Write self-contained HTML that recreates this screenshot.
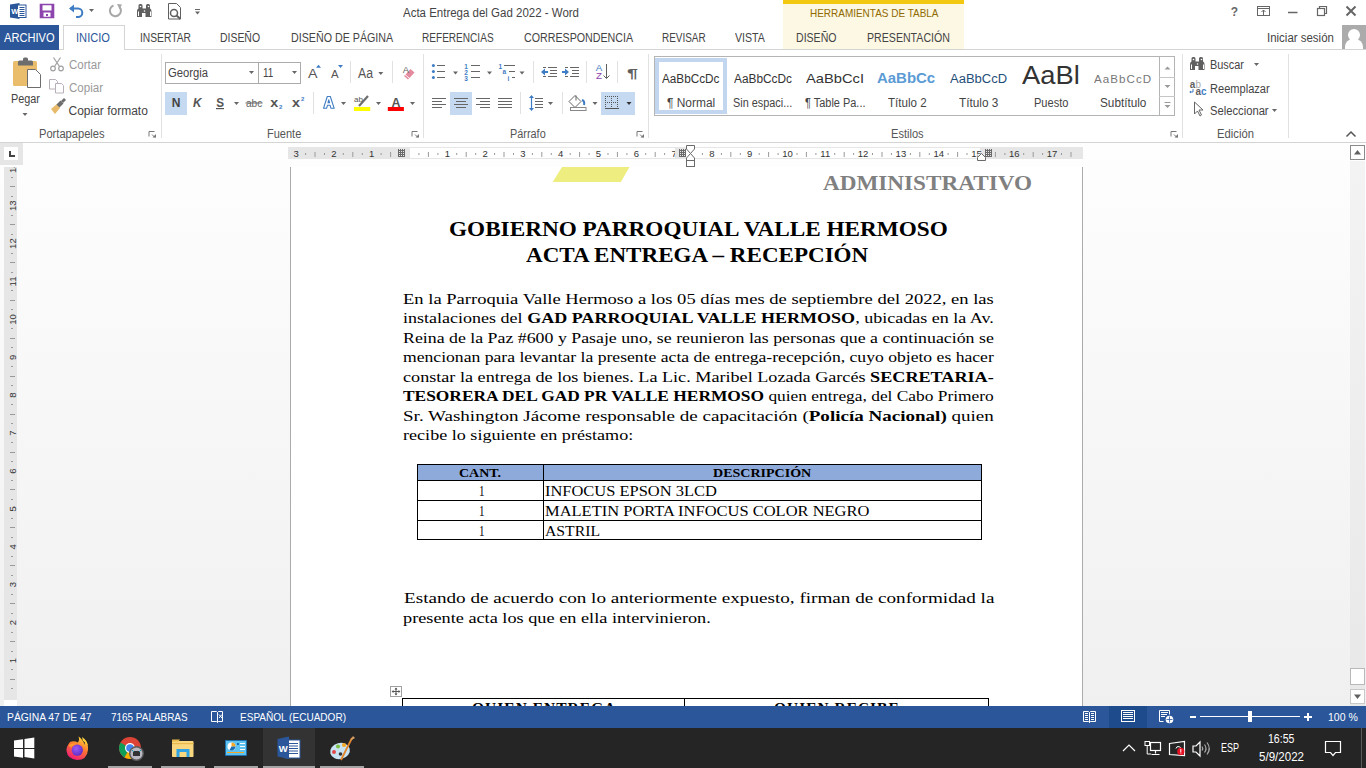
<!DOCTYPE html>
<html><head><meta charset="utf-8">
<style>
*{margin:0;padding:0;box-sizing:border-box}
html,body{width:1366px;height:768px;overflow:hidden;background:#fff;font-family:"Liberation Sans",sans-serif;color:#444;position:relative}
.a{position:absolute}
.t{position:absolute;white-space:nowrap;font-size:12px;line-height:normal;transform-origin:0 0}
.j{text-align:justify;text-align-last:justify}
svg{position:absolute;overflow:visible}
.ser{font-family:"Liberation Serif",serif}
.sep{position:absolute;width:1px;background:#E1E1E1}
</style></head><body>
<!-- ===== TITLE BAR ===== -->
<div class="t" style="--x: 403; --b: 17; --w: 176; color: rgb(68, 68, 68); left: 403px; top: 6px; transform: scaleX(0.9571);">Acta Entrega del Gad 2022 - Word</div>
<div class="a" style="left:783px;top:0;width:181px;height:49px;background:#FDF8E4"></div>
<div class="a" style="left:783px;top:0;width:181px;height:4px;background:#F2C811"></div>
<div class="t" style="--x: 809.5; --b: 17; --w: 128.5; font-size: 11px; color: rgb(143, 106, 0); left: 809.5px; top: 7px; transform: scaleX(0.9061);">HERRAMIENTAS DE TABLA</div>

<!-- ===== TABS ===== -->
<div class="a" style="left:0;top:49px;width:1366px;height:1px;background:#D4D4D4"></div>
<div class="a" style="left:0;top:25px;width:59px;height:25px;background:#2B579A"></div>
<div class="a" style="left:63px;top:25px;width:62px;height:25px;border:1px solid #D4D4D4;border-bottom:none;background:#fff"></div>
<div class="t" style="--x: 3.7; --b: 42; --w: 50.6; color: rgb(255, 255, 255); left: 3.7px; top: 31px; transform: scaleX(0.9253);">ARCHIVO</div>
<div class="t" style="--x: 76; --b: 42; --w: 34; color: rgb(43, 87, 154); left: 76px; top: 31px; transform: scaleX(0.9271);">INICIO</div>
<div class="t" style="--x: 140; --b: 42; --w: 51; left: 140px; top: 31px; transform: scaleX(0.856);">INSERTAR</div>
<div class="t" style="--x: 220; --b: 42; --w: 40; left: 220px; top: 31px; transform: scaleX(0.8693);">DISEÑO</div>
<div class="t" style="--x: 290.5; --b: 42; --w: 102.2; left: 290.5px; top: 31px; transform: scaleX(0.891);">DISEÑO DE PÁGINA</div>
<div class="t" style="--x: 422.4; --b: 42; --w: 71.6; left: 422.4px; top: 31px; transform: scaleX(0.8388);">REFERENCIAS</div>
<div class="t" style="--x: 523.6; --b: 42; --w: 109.1; left: 523.6px; top: 31px; transform: scaleX(0.8893);">CORRESPONDENCIA</div>
<div class="t" style="--x: 662.3; --b: 42; --w: 43.7; left: 662.3px; top: 31px; transform: scaleX(0.8294);">REVISAR</div>
<div class="t" style="--x: 734.7; --b: 42; --w: 29.9; left: 734.7px; top: 31px; transform: scaleX(0.8847);">VISTA</div>
<div class="t" style="--x: 796; --b: 42; --w: 40.5; left: 796px; top: 31px; transform: scaleX(0.8801);">DISEÑO</div>
<div class="t" style="--x: 866.5; --b: 42; --w: 82.9; left: 866.5px; top: 31px; transform: scaleX(0.8838);">PRESENTACIÓN</div>
<div class="t" style="--x: 1267.4; --b: 41.5; --w: 66.9; left: 1267.4px; top: 30.5px; transform: scaleX(0.9553);">Iniciar sesión</div>
<div class="a" style="left:1342px;top:25px;width:24px;height:24px;background:#ABABAB;overflow:hidden">
 <div class="a" style="left:6px;top:4px;width:12px;height:12px;border-radius:6px;background:#fff"></div>
 <div class="a" style="left:3px;top:14px;width:18px;height:14px;border-radius:8px 8px 0 0;background:#fff"></div>
</div>

<!-- ===== RIBBON TEXT ===== -->
<div class="t" style="--x: 10.8; --b: 103; --w: 29; left: 10.8px; top: 92px; transform: scaleX(0.9054);">Pegar</div>
<div class="t" style="--x: 69; --b: 69; --w: 32; color: rgb(154, 154, 154); left: 69px; top: 58px; transform: scaleX(0.9597);">Cortar</div>
<div class="t" style="--x: 69; --b: 92; --w: 34; color: rgb(154, 154, 154); left: 69px; top: 81px; transform: scaleX(0.9616);">Copiar</div>
<div class="t" style="--x: 68.5; --b: 115; --w: 79.5; left: 68.5px; top: 104px;">Copiar formato</div>
<div class="t" style="--x: 38.6; --b: 138; --w: 65.6; color: rgb(85, 85, 85); left: 38.6px; top: 127px; transform: scaleX(0.9276);">Portapapeles</div>
<div class="t" style="--x: 168.4; --b: 77; --w: 40; left: 168.4px; top: 66px; transform: scaleX(0.9367);">Georgia</div>
<div class="t" style="--x: 262.7; --b: 77; --w: 10.3; left: 262.7px; top: 66px; transform: scaleX(0.8261);">11</div>
<div class="t" style="--x: 266.7; --b: 138; --w: 34.3; color: rgb(85, 85, 85); left: 266.7px; top: 127px; transform: scaleX(0.9181);">Fuente</div>
<div class="t" style="--x: 509.6; --b: 138; --w: 35.7; color: rgb(85, 85, 85); left: 509.6px; top: 127px; transform: scaleX(0.907);">Párrafo</div>
<div class="t" style="--x: 891; --b: 138; --w: 32.6; color: rgb(85, 85, 85); left: 891px; top: 127px; transform: scaleX(0.9224);">Estilos</div>
<div class="t" style="--x: 1216.5; --b: 138; --w: 36.9; color: rgb(85, 85, 85); left: 1216.5px; top: 127px; transform: scaleX(0.9375);">Edición</div>
<div class="t" style="--x: 1210; --b: 69.3; --w: 34; left: 1210px; top: 58.3px; transform: scaleX(0.9101);">Buscar</div>
<div class="t" style="--x: 1209.8; --b: 92.5; --w: 59.7; left: 1209.8px; top: 81.5px; transform: scaleX(0.9227);">Reemplazar</div>
<div class="t" style="--x: 1209.8; --b: 115; --w: 58.6; left: 1209.8px; top: 104px; transform: scaleX(0.9346);">Seleccionar</div>
<!-- style labels -->
<div class="t" style="--x: 666.5; --b: 106.5; --w: 48.2; left: 666.5px; top: 95.5px; transform: scaleX(0.9948);">¶ Normal</div>
<div class="t" style="--x: 732.7; --b: 106.5; --w: 59.3; left: 732.7px; top: 95.5px; transform: scaleX(0.9071);">Sin espaci...</div>
<div class="t" style="--x: 804.8; --b: 106.5; --w: 60.5; left: 804.8px; top: 95.5px; transform: scaleX(0.913);">¶ Table Pa...</div>
<div class="t" style="--x: 887.8; --b: 106.5; --w: 38.6; left: 887.8px; top: 95.5px; transform: scaleX(0.9642);">Título 2</div>
<div class="t" style="--x: 959; --b: 106.5; --w: 39.4; left: 959px; top: 95.5px; transform: scaleX(0.9842);">Título 3</div>
<div class="t" style="--x: 1033.6; --b: 106.5; --w: 34.4; left: 1033.6px; top: 95.5px; transform: scaleX(0.9208);">Puesto</div>
<div class="t" style="--x: 1099.6; --b: 106.5; --w: 46.4; left: 1099.6px; top: 95.5px; transform: scaleX(0.9794);">Subtítulo</div>
<!-- style previews -->
<div class="t" style="--x: 662.4; --b: 82.8; --w: 57.4; color: rgb(51, 51, 51); left: 662.4px; top: 71.8px; transform: scaleX(0.9781);">AaBbCcDc</div>
<div class="t" style="--x: 734; --b: 82.8; --w: 58; color: rgb(51, 51, 51); left: 734px; top: 71.8px; transform: scaleX(0.9883);">AaBbCcDc</div>
<div class="t" style="--x: 805.9; --b: 82.8; --w: 58; font-size: 13px; color: rgb(51, 51, 51); left: 805.9px; top: 70.8px; transform: scaleX(1.1303);">AaBbCcI</div>
<div class="t" style="--x: 877; --b: 82.5; --w: 58.2; font-size: 14px; font-weight: bold; color: rgb(91, 155, 213); left: 877px; top: 69.5px; transform: scaleX(1.0685);">AaBbCc</div>
<div class="t" style="--x: 950; --b: 82.5; --w: 57; font-size: 12px; color: rgb(31, 78, 121); left: 950px; top: 71.5px; transform: scaleX(1.0819);">AaBbCcD</div>
<div class="t" style="--x: 1022.3; --b: 84.3; --w: 57.7; font-size: 26px; color: rgb(51, 51, 51); left: 1022.3px; top: 60.3px; transform: scaleX(1.0506);">AaBl</div>
<div class="t" style="--x: 1094; --b: 82.5; --w: 58.3; font-size: 11px; color: rgb(119, 119, 119); letter-spacing: 1px; left: 1094px; top: 72.5px; transform: scaleX(1.0543);">AaBbCcD</div>

<!-- ===== RIBBON STRUCTURE ===== -->
<div class="a" style="left:0;top:142px;width:1366px;height:1px;background:#D4D4D4"></div>
<div class="sep" style="left:161px;top:54px;height:84px"></div>
<div class="sep" style="left:423px;top:54px;height:84px"></div>
<div class="sep" style="left:648px;top:54px;height:84px"></div>
<div class="sep" style="left:1182px;top:54px;height:84px"></div>
<div class="sep" style="left:1288px;top:54px;height:84px"></div>
<!-- font boxes -->
<div class="a" style="left:165px;top:62px;width:94px;height:22px;border:1px solid #ABABAB"></div>
<div class="a" style="left:258px;top:62px;width:43px;height:22px;border:1px solid #ABABAB"></div>
<!-- highlights -->
<div class="a" style="left:165px;top:92px;width:22px;height:23px;background:#C5D9F1"></div>
<div class="a" style="left:450px;top:92px;width:22px;height:23px;background:#C5D9F1"></div>
<div class="a" style="left:601px;top:92px;width:34px;height:23px;background:#C5D9F1"></div>
<!-- gallery -->
<div class="a" style="left:654px;top:56px;width:521px;height:60px;border:1px solid #B4B4B4"></div>
<div class="a" style="left:655px;top:58px;width:72px;height:56px;border:4px solid #C3D6F0"></div>
<div class="a" style="left:1159px;top:56px;width:1px;height:60px;background:#B4B4B4"></div>
<div class="a" style="left:1159px;top:77px;width:16px;height:1px;background:#C6C6C6"></div>
<div class="a" style="left:1159px;top:96px;width:16px;height:1px;background:#C6C6C6"></div>


<!-- ===== DOC AREA ===== -->
<div class="a" style="left:0;top:143px;width:1366px;height:563px;background:linear-gradient(#FEFEFE 0%,#FBFBFB 20%,#F0F0F0 100%)"></div>
<!-- tab selector -->
<div class="a" style="left:0;top:143px;width:23px;height:22px;background:#E6E6E6"></div>
<div class="a" style="left:4px;top:147px;width:14px;height:13px;background:#fff"></div>
<div class="a" style="left:9px;top:151px;width:2px;height:6px;background:#444"></div>
<div class="a" style="left:9px;top:155px;width:6px;height:2px;background:#444"></div>
<!-- horizontal ruler -->
<div class="a" style="left:288px;top:147px;width:795px;height:12px;background:#E6E6E6"></div>
<div class="a" style="left:410px;top:148px;width:265px;height:10px;background:#fff"></div>
<div class="a" style="left:686px;top:148px;width:294px;height:10px;background:#fff"></div>
<svg id="hruler" width="1366" height="30" style="left:0;top:143px"><text x="296.1" y="14" font-size="9.5" text-anchor="middle" fill="#333" font-family="Liberation Sans">3</text><rect x="305.1" y="10" width="1" height="2" fill="#9A9A9A"></rect><rect x="314.5" y="9" width="1" height="5" fill="#9A9A9A"></rect><rect x="324.0" y="10" width="1" height="2" fill="#9A9A9A"></rect><text x="333.9" y="14" font-size="9.5" text-anchor="middle" fill="#333" font-family="Liberation Sans">2</text><rect x="342.8" y="10" width="1" height="2" fill="#9A9A9A"></rect><rect x="352.3" y="9" width="1" height="5" fill="#9A9A9A"></rect><rect x="361.8" y="10" width="1" height="2" fill="#9A9A9A"></rect><text x="371.7" y="14" font-size="9.5" text-anchor="middle" fill="#333" font-family="Liberation Sans">1</text><rect x="380.6" y="10" width="1" height="2" fill="#9A9A9A"></rect><rect x="390.1" y="9" width="1" height="5" fill="#9A9A9A"></rect><rect x="418.4" y="10" width="1" height="2" fill="#9A9A9A"></rect><rect x="427.9" y="9" width="1" height="5" fill="#9A9A9A"></rect><rect x="437.4" y="10" width="1" height="2" fill="#9A9A9A"></rect><text x="447.3" y="14" font-size="9.5" text-anchor="middle" fill="#333" font-family="Liberation Sans">1</text><rect x="456.2" y="10" width="1" height="2" fill="#9A9A9A"></rect><rect x="465.7" y="9" width="1" height="5" fill="#9A9A9A"></rect><rect x="475.2" y="10" width="1" height="2" fill="#9A9A9A"></rect><text x="485.1" y="14" font-size="9.5" text-anchor="middle" fill="#333" font-family="Liberation Sans">2</text><rect x="494.1" y="10" width="1" height="2" fill="#9A9A9A"></rect><rect x="503.5" y="9" width="1" height="5" fill="#9A9A9A"></rect><rect x="513.0" y="10" width="1" height="2" fill="#9A9A9A"></rect><text x="522.9" y="14" font-size="9.5" text-anchor="middle" fill="#333" font-family="Liberation Sans">3</text><rect x="531.9" y="10" width="1" height="2" fill="#9A9A9A"></rect><rect x="541.3" y="9" width="1" height="5" fill="#9A9A9A"></rect><rect x="550.8" y="10" width="1" height="2" fill="#9A9A9A"></rect><text x="560.7" y="14" font-size="9.5" text-anchor="middle" fill="#333" font-family="Liberation Sans">4</text><rect x="569.7" y="10" width="1" height="2" fill="#9A9A9A"></rect><rect x="579.1" y="9" width="1" height="5" fill="#9A9A9A"></rect><rect x="588.6" y="10" width="1" height="2" fill="#9A9A9A"></rect><text x="598.5" y="14" font-size="9.5" text-anchor="middle" fill="#333" font-family="Liberation Sans">5</text><rect x="607.5" y="10" width="1" height="2" fill="#9A9A9A"></rect><rect x="616.9" y="9" width="1" height="5" fill="#9A9A9A"></rect><rect x="626.4" y="10" width="1" height="2" fill="#9A9A9A"></rect><text x="636.3" y="14" font-size="9.5" text-anchor="middle" fill="#333" font-family="Liberation Sans">6</text><rect x="645.2" y="10" width="1" height="2" fill="#9A9A9A"></rect><rect x="654.7" y="9" width="1" height="5" fill="#9A9A9A"></rect><rect x="664.1" y="10" width="1" height="2" fill="#9A9A9A"></rect><text x="674.1" y="14" font-size="9.5" text-anchor="middle" fill="#333" font-family="Liberation Sans">7</text><rect x="701.9" y="10" width="1" height="2" fill="#9A9A9A"></rect><text x="711.9" y="14" font-size="9.5" text-anchor="middle" fill="#333" font-family="Liberation Sans">8</text><rect x="720.9" y="10" width="1" height="2" fill="#9A9A9A"></rect><rect x="730.3" y="9" width="1" height="5" fill="#9A9A9A"></rect><rect x="739.8" y="10" width="1" height="2" fill="#9A9A9A"></rect><text x="749.7" y="14" font-size="9.5" text-anchor="middle" fill="#333" font-family="Liberation Sans">9</text><rect x="758.7" y="10" width="1" height="2" fill="#9A9A9A"></rect><rect x="768.1" y="9" width="1" height="5" fill="#9A9A9A"></rect><rect x="777.6" y="10" width="1" height="2" fill="#9A9A9A"></rect><text x="787.5" y="14" font-size="9.5" text-anchor="middle" fill="#333" font-family="Liberation Sans">10</text><rect x="796.5" y="10" width="1" height="2" fill="#9A9A9A"></rect><rect x="805.9" y="9" width="1" height="5" fill="#9A9A9A"></rect><rect x="815.4" y="10" width="1" height="2" fill="#9A9A9A"></rect><text x="825.3" y="14" font-size="9.5" text-anchor="middle" fill="#333" font-family="Liberation Sans">11</text><rect x="834.2" y="10" width="1" height="2" fill="#9A9A9A"></rect><rect x="843.7" y="9" width="1" height="5" fill="#9A9A9A"></rect><rect x="853.1" y="10" width="1" height="2" fill="#9A9A9A"></rect><text x="863.1" y="14" font-size="9.5" text-anchor="middle" fill="#333" font-family="Liberation Sans">12</text><rect x="872.0" y="10" width="1" height="2" fill="#9A9A9A"></rect><rect x="881.5" y="9" width="1" height="5" fill="#9A9A9A"></rect><rect x="890.9" y="10" width="1" height="2" fill="#9A9A9A"></rect><text x="900.9" y="14" font-size="9.5" text-anchor="middle" fill="#333" font-family="Liberation Sans">13</text><rect x="909.9" y="10" width="1" height="2" fill="#9A9A9A"></rect><rect x="919.3" y="9" width="1" height="5" fill="#9A9A9A"></rect><rect x="928.8" y="10" width="1" height="2" fill="#9A9A9A"></rect><text x="938.7" y="14" font-size="9.5" text-anchor="middle" fill="#333" font-family="Liberation Sans">14</text><rect x="947.6" y="10" width="1" height="2" fill="#9A9A9A"></rect><rect x="957.1" y="9" width="1" height="5" fill="#9A9A9A"></rect><rect x="966.5" y="10" width="1" height="2" fill="#9A9A9A"></rect><text x="976.5" y="14" font-size="9.5" text-anchor="middle" fill="#333" font-family="Liberation Sans">15</text><rect x="994.9" y="9" width="1" height="5" fill="#9A9A9A"></rect><rect x="1004.4" y="10" width="1" height="2" fill="#9A9A9A"></rect><text x="1014.3" y="14" font-size="9.5" text-anchor="middle" fill="#333" font-family="Liberation Sans">16</text><rect x="1023.2" y="10" width="1" height="2" fill="#9A9A9A"></rect><rect x="1032.7" y="9" width="1" height="5" fill="#9A9A9A"></rect><rect x="1042.1" y="10" width="1" height="2" fill="#9A9A9A"></rect><text x="1052.1" y="14" font-size="9.5" text-anchor="middle" fill="#333" font-family="Liberation Sans">17</text><rect x="1061.0" y="10" width="1" height="2" fill="#9A9A9A"></rect><rect x="1070.5" y="9" width="1" height="5" fill="#9A9A9A"></rect></svg>
<!-- vertical ruler -->
<div class="a" style="left:4px;top:167px;width:13px;height:533px;background:#E6E6E6"></div>
<div class="a" style="left:4px;top:700px;width:13px;height:6px;background:#fff"></div>
<svg id="vruler" width="30" height="533" style="left:0;top:167px;overflow:hidden"><text transform="translate(15.5,493.5) rotate(-90)" font-size="9.5" text-anchor="middle" fill="#333" font-family="Liberation Sans">1</text><rect x="11" y="502" width="2" height="1" fill="#9A9A9A"></rect><rect x="10" y="512" width="5" height="1" fill="#9A9A9A"></rect><rect x="11" y="521" width="2" height="1" fill="#9A9A9A"></rect><text transform="translate(15.5,455.6) rotate(-90)" font-size="9.5" text-anchor="middle" fill="#333" font-family="Liberation Sans">2</text><rect x="11" y="465" width="2" height="1" fill="#9A9A9A"></rect><rect x="10" y="474" width="5" height="1" fill="#9A9A9A"></rect><rect x="11" y="484" width="2" height="1" fill="#9A9A9A"></rect><text transform="translate(15.5,417.7) rotate(-90)" font-size="9.5" text-anchor="middle" fill="#333" font-family="Liberation Sans">3</text><rect x="11" y="427" width="2" height="1" fill="#9A9A9A"></rect><rect x="10" y="436" width="5" height="1" fill="#9A9A9A"></rect><rect x="11" y="446" width="2" height="1" fill="#9A9A9A"></rect><text transform="translate(15.5,379.8) rotate(-90)" font-size="9.5" text-anchor="middle" fill="#333" font-family="Liberation Sans">4</text><rect x="11" y="389" width="2" height="1" fill="#9A9A9A"></rect><rect x="10" y="398" width="5" height="1" fill="#9A9A9A"></rect><rect x="11" y="408" width="2" height="1" fill="#9A9A9A"></rect><text transform="translate(15.5,341.9) rotate(-90)" font-size="9.5" text-anchor="middle" fill="#333" font-family="Liberation Sans">5</text><rect x="11" y="351" width="2" height="1" fill="#9A9A9A"></rect><rect x="10" y="360" width="5" height="1" fill="#9A9A9A"></rect><rect x="11" y="370" width="2" height="1" fill="#9A9A9A"></rect><text transform="translate(15.5,304.0) rotate(-90)" font-size="9.5" text-anchor="middle" fill="#333" font-family="Liberation Sans">6</text><rect x="11" y="313" width="2" height="1" fill="#9A9A9A"></rect><rect x="10" y="322" width="5" height="1" fill="#9A9A9A"></rect><rect x="11" y="332" width="2" height="1" fill="#9A9A9A"></rect><text transform="translate(15.5,266.1) rotate(-90)" font-size="9.5" text-anchor="middle" fill="#333" font-family="Liberation Sans">7</text><rect x="11" y="275" width="2" height="1" fill="#9A9A9A"></rect><rect x="10" y="285" width="5" height="1" fill="#9A9A9A"></rect><rect x="11" y="294" width="2" height="1" fill="#9A9A9A"></rect><text transform="translate(15.5,228.2) rotate(-90)" font-size="9.5" text-anchor="middle" fill="#333" font-family="Liberation Sans">8</text><rect x="11" y="237" width="2" height="1" fill="#9A9A9A"></rect><rect x="10" y="247" width="5" height="1" fill="#9A9A9A"></rect><rect x="11" y="256" width="2" height="1" fill="#9A9A9A"></rect><text transform="translate(15.5,190.3) rotate(-90)" font-size="9.5" text-anchor="middle" fill="#333" font-family="Liberation Sans">9</text><rect x="11" y="199" width="2" height="1" fill="#9A9A9A"></rect><rect x="10" y="209" width="5" height="1" fill="#9A9A9A"></rect><rect x="11" y="218" width="2" height="1" fill="#9A9A9A"></rect><text transform="translate(15.5,152.4) rotate(-90)" font-size="9.5" text-anchor="middle" fill="#333" font-family="Liberation Sans">10</text><rect x="11" y="161" width="2" height="1" fill="#9A9A9A"></rect><rect x="10" y="171" width="5" height="1" fill="#9A9A9A"></rect><rect x="11" y="180" width="2" height="1" fill="#9A9A9A"></rect><text transform="translate(15.5,114.5) rotate(-90)" font-size="9.5" text-anchor="middle" fill="#333" font-family="Liberation Sans">11</text><rect x="11" y="123" width="2" height="1" fill="#9A9A9A"></rect><rect x="10" y="133" width="5" height="1" fill="#9A9A9A"></rect><rect x="11" y="142" width="2" height="1" fill="#9A9A9A"></rect><text transform="translate(15.5,76.6) rotate(-90)" font-size="9.5" text-anchor="middle" fill="#333" font-family="Liberation Sans">12</text><rect x="11" y="86" width="2" height="1" fill="#9A9A9A"></rect><rect x="10" y="95" width="5" height="1" fill="#9A9A9A"></rect><rect x="11" y="105" width="2" height="1" fill="#9A9A9A"></rect><text transform="translate(15.5,38.7) rotate(-90)" font-size="9.5" text-anchor="middle" fill="#333" font-family="Liberation Sans">13</text><rect x="11" y="48" width="2" height="1" fill="#9A9A9A"></rect><rect x="10" y="57" width="5" height="1" fill="#9A9A9A"></rect><rect x="11" y="67" width="2" height="1" fill="#9A9A9A"></rect><text transform="translate(15.5,0.8) rotate(-90)" font-size="9.5" text-anchor="middle" fill="#333" font-family="Liberation Sans">14</text><rect x="11" y="10" width="2" height="1" fill="#9A9A9A"></rect><rect x="10" y="19" width="5" height="1" fill="#9A9A9A"></rect><rect x="11" y="29" width="2" height="1" fill="#9A9A9A"></rect></svg>
<!-- page -->
<div class="a" style="left:290px;top:167px;width:793px;height:539px;background:#fff;border-left:1px solid #ABABAB;border-right:1px solid #ABABAB"></div>
<svg width="80" height="16" style="left:552px;top:167px"><polygon points="10,0 77.5,0 68.8,15 0.7,15" fill="#EEEE80"></polygon></svg>
<div class="t ser" style="--x: 823; --b: 190; --w: 209; font-size: 22px; font-weight: bold; color: rgb(128, 128, 128); left: 823px; top: 170px; transform: scaleX(1.0534);">ADMINISTRATIVO</div>
<div class="t ser" style="--x: 449; --b: 235.7; --w: 498.8; font-size: 22px; font-weight: bold; color: rgb(0, 0, 0); left: 449px; top: 215.7px; transform: scaleX(1.0557);">GOBIERNO PARROQUIAL VALLE HERMOSO</div>
<div class="t ser" style="--x: 526.3; --b: 261.8; --w: 342.2; font-size: 22px; font-weight: bold; color: rgb(0, 0, 0); left: 526.3px; top: 241.8px; transform: scaleX(1.0478);">ACTA ENTREGA – RECEPCIÓN</div>
<div class="t ser" style="--x: 403.2; --b: 303.5; --w: 590.8; font-size: 15px; color: rgb(0, 0, 0); left: 403.2px; top: 290.5px; transform: scaleX(1.2361);">En la Parroquia Valle Hermoso a los 05 días mes de septiembre del 2022, en las</div>
<div class="t ser" style="--x: 403.2; --b: 323.1; --w: 590.8; font-size: 15px; color: rgb(0, 0, 0); left: 403.2px; top: 310.1px; transform: scaleX(1.2016);">instalaciones del <b>GAD PARROQUIAL VALLE HERMOSO</b>, ubicadas en la Av.</div>
<div class="t ser" style="--x: 403.2; --b: 342.6; --w: 590.8; font-size: 15px; color: rgb(0, 0, 0); left: 403.2px; top: 329.6px; transform: scaleX(1.1879);">Reina de la Paz #600 y Pasaje uno, se reunieron las personas que a continuación se</div>
<div class="t ser" style="--x: 403.2; --b: 362.2; --w: 590.8; font-size: 15px; color: rgb(0, 0, 0); left: 403.2px; top: 349.2px; transform: scaleX(1.1744);">mencionan para levantar la presente acta de entrega-recepción, cuyo objeto es hacer</div>
<div class="t ser" style="--x: 403.2; --b: 381.7; --w: 590.8; font-size: 15px; color: rgb(0, 0, 0); left: 403.2px; top: 368.7px; transform: scaleX(1.2098);">constar la entrega de los bienes. La Lic. Maribel Lozada Garcés <b>SECRETARIA-</b></div>
<div class="t ser" style="--x: 403.2; --b: 401.3; --w: 590.8; font-size: 15px; color: rgb(0, 0, 0); left: 403.2px; top: 388.3px; transform: scaleX(1.1587);"><b>TESORERA DEL GAD PR VALLE HERMOSO</b> quien entrega, del Cabo Primero</div>
<div class="t ser" style="--x: 403.2; --b: 420.8; --w: 590.8; font-size: 15px; color: rgb(0, 0, 0); left: 403.2px; top: 407.8px; transform: scaleX(1.2692);">Sr. Washington Jácome responsable de capacitación (<b>Policía Nacional)</b> quien</div>
<div class="t ser" style="--x: 403.2; --b: 440.4; --w: 230.3; font-size: 15px; color: rgb(0, 0, 0); left: 403.2px; top: 427.4px; transform: scaleX(1.2071);">recibe lo siguiente en préstamo:</div>
<!-- table 1 -->
<div class="a" style="left:417px;top:464px;width:565px;height:76px;border:1px solid #000"></div>
<div class="a" style="left:418px;top:465px;width:563px;height:15px;background:#8EAADB"></div>
<div class="a" style="left:418px;top:480px;width:563px;height:1px;background:#000"></div>
<div class="a" style="left:418px;top:500px;width:563px;height:1px;background:#000"></div>
<div class="a" style="left:418px;top:520px;width:563px;height:1px;background:#000"></div>
<div class="a" style="left:543px;top:465px;width:1px;height:74px;background:#000"></div>
<div class="t ser" style="--x: 459; --b: 477; --w: 42; font-size: 13px; font-weight: bold; color: rgb(0, 0, 0); left: 459px; top: 465px; transform: scaleX(1.0735);">CANT.</div>
<div class="t ser" style="--x: 712.7; --b: 477; --w: 98.2; font-size: 13px; font-weight: bold; color: rgb(0, 0, 0); left: 712.7px; top: 465px; transform: scaleX(1.0789);">DESCRIPCIÓN</div>
<div class="t ser" style="--x: 478.5; --b: 495.7; --w: 5.5; font-size: 15px; color: rgb(0, 0, 0); left: 478.5px; top: 482.7px; transform: scaleX(0.7333);">1</div>
<div class="t ser" style="--x: 478.5; --b: 515.8; --w: 5.5; font-size: 15px; color: rgb(0, 0, 0); left: 478.5px; top: 502.8px; transform: scaleX(0.7333);">1</div>
<div class="t ser" style="--x: 478.5; --b: 535.5; --w: 5.5; font-size: 15px; color: rgb(0, 0, 0); left: 478.5px; top: 522.5px; transform: scaleX(0.7333);">1</div>
<div class="t ser" style="--x: 544.7; --b: 495.7; --w: 171.8; font-size: 15px; color: rgb(0, 0, 0); left: 544.7px; top: 482.7px; transform: scaleX(1.0963);">INFOCUS EPSON 3LCD</div>
<div class="t ser" style="--x: 544.7; --b: 515.8; --w: 324.4; font-size: 15px; color: rgb(0, 0, 0); left: 544.7px; top: 502.8px; transform: scaleX(1.0981);">MALETIN PORTA INFOCUS COLOR NEGRO</div>
<div class="t ser" style="--x: 544.7; --b: 535.5; --w: 55; font-size: 15px; color: rgb(0, 0, 0); left: 544.7px; top: 522.5px; transform: scaleX(1.0476);">ASTRIL</div>
<!-- paragraph 2 -->
<div class="t ser" style="--x: 403.6; --b: 602.8; --w: 590.4; font-size: 15px; color: rgb(0, 0, 0); left: 403.6px; top: 589.8px; transform: scaleX(1.2759);">Estando de acuerdo con lo anteriormente expuesto, firman de conformidad la</div>
<div class="t ser" style="--x: 403.2; --b: 622.6; --w: 307.8; font-size: 15px; color: rgb(0, 0, 0); left: 403.2px; top: 609.6px; transform: scaleX(1.2175);">presente acta los que en ella intervinieron.</div>
<!-- table 2 -->
<div class="a" style="left:390px;top:686px;width:12px;height:11px;border:1px solid #A0A0A0;background:#fff"></div>
<div class="a" style="left:402px;top:698px;width:587px;height:20px;border:1px solid #000;border-bottom:none"></div>
<div class="a" style="left:684px;top:699px;width:1px;height:10px;background:#000"></div>
<div class="t ser" style="--x: 471.8; --b: 712.8; --w: 144.4; font-size: 15px; font-weight: bold; color: rgb(0, 0, 0); letter-spacing: 1px; left: 471.8px; top: 699.8px; transform: scaleX(1.0306);">QUIEN ENTREGA</div>
<div class="t ser" style="--x: 773.7; --b: 712.8; --w: 125.7; font-size: 15px; font-weight: bold; color: rgb(0, 0, 0); letter-spacing: 1px; left: 773.7px; top: 699.8px; transform: scaleX(1.0265);">QUIEN RECIBE</div>
<!-- scrollbar -->
<div class="a" style="left:1350px;top:161px;width:15px;height:545px;background:linear-gradient(#F3F3F3,#E8E8E8)"></div>
<div class="a" style="left:1350px;top:145px;width:15px;height:15px;border:1px solid #8A8A8A;background:#fff"></div>
<svg width="15" height="15" style="left:1350px;top:145px"><polygon points="4,9.5 11,9.5 7.5,5" fill="#606060"></polygon></svg>
<div class="a" style="left:1350px;top:668px;width:15px;height:17px;border:1px solid #B8B8B8;background:#fff"></div>
<div class="a" style="left:1350px;top:689px;width:15px;height:15px;border:1px solid #C8C8C8;background:#fff"></div>
<svg width="15" height="15" style="left:1350px;top:689px"><polygon points="4,5.5 11,5.5 7.5,10" fill="#606060"></polygon></svg>
<!-- ===== STATUS BAR ===== -->
<div class="a" style="left:0;top:706px;width:1366px;height:22px;background:#2B579A"></div>
<div class="t" style="--x: 7; --b: 721; --w: 84.4; color: rgb(255, 255, 255); font-size: 11px; left: 7px; top: 711px; transform: scaleX(0.9389);">PÁGINA 47 DE 47</div>
<div class="t" style="--x: 111.4; --b: 721; --w: 76.6; color: rgb(255, 255, 255); font-size: 11px; left: 111.4px; top: 711px; transform: scaleX(0.9033);">7165 PALABRAS</div>
<div class="t" style="--x: 240; --b: 721; --w: 106; color: rgb(255, 255, 255); font-size: 11px; left: 240px; top: 711px; transform: scaleX(0.9127);">ESPAÑOL (ECUADOR)</div>
<div class="t" style="--x: 1327.6; --b: 721; --w: 29.8; color: rgb(255, 255, 255); font-size: 11px; left: 1327.6px; top: 711px; transform: scaleX(0.955);">100 %</div>
<!-- ===== TASKBAR ===== -->
<div class="a" style="left:0;top:728px;width:1366px;height:40px;background:#252525"></div>
<div class="t" style="--x: 1221.4; --b: 752; --w: 18; color: rgb(255, 255, 255); font-size: 12px; left: 1221.4px; top: 741px; transform: scaleX(0.7495);">ESP</div>
<div class="t" style="--x: 1267.6; --b: 743.2; --w: 26.4; color: rgb(255, 255, 255); font-size: 12px; left: 1267.6px; top: 732.2px; transform: scaleX(0.8791);">16:55</div>
<div class="t" style="--x: 1258.7; --b: 761.2; --w: 45; color: rgb(255, 255, 255); font-size: 12px; left: 1258.7px; top: 750.2px; transform: scaleX(0.9632);">5/9/2022</div>
<!-- ===== ICON OVERLAY ===== -->
<svg width="1366" height="768" style="left:0;top:0;z-index:5" shape-rendering="auto">
<defs>
 <path id="dd" d="M0,0h5l-2.5,3z"></path>
</defs>
<!-- QAT -->
<g>
 <path d="M10,4.5 L19.5,3 L19.5,19 L10,17.5z" fill="#2B579A"></path>
 <rect x="17.5" y="5" width="8.5" height="12.5" fill="#fff" stroke="#2B579A" stroke-width="1"></rect>
 <path d="M19.5,7.5h5M19.5,9.5h5M19.5,11.5h5M19.5,13.5h5M19.5,15.5h5" stroke="#2B579A" stroke-width="1"></path>
 <text x="14.8" y="14.3" font-size="7.5" font-weight="bold" fill="#fff" text-anchor="middle" font-family="Liberation Sans">W</text>
 <path d="M40.5,4.5h13v13h-13z" fill="none" stroke="#8E44AD" stroke-width="1.6"></path>
 <rect x="42.5" y="5" width="9" height="5.5" fill="#fff"></rect>
 <path d="M40,4h14v14h-14z M42.5,5.2v5.3h9v-5.3z M43.5,12.5v5h7v-5z" fill="#8E44AD" fill-rule="evenodd"></path>
 <rect x="46" y="14" width="2" height="2" fill="#8E44AD"></rect>
 <path d="M70.5,8.5 H78 a4.3,4.3 0 0 1 0,8.6 H76" fill="none" stroke="#3E7CC3" stroke-width="2"></path>
 <path d="M69,8.5 L74,4.5 L74,12.5z" fill="#3E7CC3"></path>
 <use href="#dd" x="89" y="9" fill="#666"></use>
 <path d="M119.5,7 a5.5,5.5 0 1 1 -6,-1.5" fill="none" stroke="#A8A8A8" stroke-width="2"></path>
 <path d="M117,4 L122,4.5 L119.5,9z" fill="#A8A8A8"></path>
 <use href="#bino" x="-1053" y="-53"></use>
 <path d="M168.5,3.5h8l4,4v11.5h-12z" fill="#fff" stroke="#5F5F5F" stroke-width="1"></path>
 <circle cx="174" cy="13" r="3.5" fill="none" stroke="#5F5F5F" stroke-width="1.5"></circle>
 <path d="M176.5,15.5l4,3.5" stroke="#5F5F5F" stroke-width="2"></path>
 <path d="M195,9.5h5" stroke="#666" stroke-width="1"></path><use href="#dd" x="195" y="11.5" fill="#666"></use>
</g>
<!-- window controls -->
<g fill="none" stroke="#666">
 <text x="1234.5" y="16" font-size="12" font-weight="bold" fill="#666" stroke="none" text-anchor="middle" font-family="Liberation Sans">?</text>
 <rect x="1257.5" y="6.5" width="12" height="9" stroke-width="1"></rect>
 <path d="M1257.5,8.5h12" stroke-width="1"></path>
 <path d="M1263.5,15v-5M1261.5,12l2,-2l2,2" stroke-width="1"></path>
 <path d="M1288,12.5h9.5" stroke-width="1.5"></path>
 <rect x="1317.5" y="8.5" width="7" height="7" stroke-width="1.2"></rect>
 <path d="M1319.5,8.5v-2h7v7h-2" stroke-width="1.2"></path>
 <path d="M1346.5,6.5l9,9M1355.5,6.5l-9,9" stroke-width="2"></path>
</g>
<!-- Portapapeles -->
<g>
 <rect x="13" y="61" width="24" height="25" rx="1.5" fill="#E9BD6B"></rect>
 <path d="M18,65.5v-3.5q0,-1.5 1.5,-1.5h3.5v-1.5q0,-1.5 1.5,-1.5h2q1.5,0 1.5,1.5v1.5h3.5q1.5,0 1.5,1.5v3.5z" fill="#6D6D6D"></path>
 <path d="M27.5,69.5h8l5,5v13h-13z" fill="#fff" stroke="#6D6D6D" stroke-width="1"></path>
 <use href="#dd" x="22.5" y="113" fill="#666"></use>
 <g fill="none" stroke="#A0A0A0" stroke-width="1.2"><circle cx="53" cy="68.5" r="2.3"></circle><circle cx="61" cy="68.5" r="2.3"></circle><path d="M54.5,66.5l6,-9M59.5,66.5l-6,-9"></path></g>
 <g fill="#fff" stroke="#B8B0B8" stroke-width="1"><path d="M49.5,79.5h6l2,2v7.5h-8z"></path><path d="M55.5,83.5h6l2,2v7.5h-8z"></path></g>
 <path d="M51,109 L57,104 L60,108 L55,114z" fill="#E8BA6A"></path>
 <path d="M56.5,104.5l4-4l3,3l-4,4z" fill="#6D6D6D"></path>
 <path d="M61,101l3-3l2,2l-3,3z" fill="#6D6D6D"></path>
 <path d="M154.5,131.5h-5.5v5" fill="none" stroke="#777" stroke-width="1"></path><path d="M152,134.5l3,3" stroke="#777" stroke-width="1"></path><path d="M156,134v3.5h-3.5z" fill="#777"></path>
</g>
<!-- Fuente -->
<g>
 <use href="#dd" x="249" y="71" fill="#666"></use>
 <use href="#dd" x="292" y="71" fill="#666"></use>
 <text x="308" y="77.8" font-size="13" fill="#555" font-family="Liberation Sans" textLength="9.5" lengthAdjust="spacingAndGlyphs">A</text>
 <path d="M316,67.8l2.5,-3l2.5,3z" fill="#3E7CC3"></path>
 <text x="331" y="77.8" font-size="10" fill="#555" font-family="Liberation Sans" textLength="7.6" lengthAdjust="spacingAndGlyphs">A</text>
 <path d="M338,65h5l-2.5,3z" fill="#3E7CC3"></path>
 <rect x="350" y="61" width="1" height="22" fill="#E1E1E1"></rect>
 <text x="358" y="77.8" font-size="14" fill="#555" font-family="Liberation Sans" textLength="15" lengthAdjust="spacingAndGlyphs">Aa</text>
 <use href="#dd" x="378.3" y="72" fill="#666"></use>
 <rect x="392" y="61" width="1" height="22" fill="#E1E1E1"></rect>
 <path d="M410.5,69 L414.5,72.5 L409.5,78 L405.5,74.5z" fill="#E48A9E"></path>
 <path d="M404.5,75.5l4,3.5" stroke="#E48A9E" stroke-width="1.6"></path>
 <text x="402.8" y="73.3" font-size="9.5" fill="#666" font-family="Liberation Sans">A</text>
 <text x="171.8" y="106.8" font-size="12.5" font-weight="bold" fill="#444" font-family="Liberation Sans" textLength="8.7" lengthAdjust="spacingAndGlyphs">N</text>
 <text x="193" y="106.8" font-size="12.5" font-weight="bold" font-style="italic" fill="#555" font-family="Liberation Sans" textLength="8.5" lengthAdjust="spacingAndGlyphs">K</text>
 <text x="216.2" y="106.8" font-size="12.5" font-weight="bold" fill="#555" font-family="Liberation Sans" textLength="7.8" lengthAdjust="spacingAndGlyphs">S</text>
 <rect x="216" y="108" width="8" height="1.2" fill="#555"></rect>
 <use href="#dd" x="234" y="102" fill="#666"></use>
 <text x="246" y="107" font-size="11" fill="#666" font-family="Liberation Sans" textLength="16.3" lengthAdjust="spacingAndGlyphs">abc</text>
 <rect x="245.5" y="102.5" width="17" height="1" fill="#666"></rect>
 <text x="270.2" y="107" font-size="12" font-weight="bold" fill="#555" font-family="Liberation Sans" textLength="8" lengthAdjust="spacingAndGlyphs">x</text>
 <text x="279" y="108.5" font-size="6" font-weight="bold" fill="#3E7CC3" font-family="Liberation Sans">2</text>
 <text x="292" y="107" font-size="12" font-weight="bold" fill="#555" font-family="Liberation Sans" textLength="8" lengthAdjust="spacingAndGlyphs">x</text>
 <text x="301" y="101" font-size="6" font-weight="bold" fill="#3E7CC3" font-family="Liberation Sans">2</text>
 <rect x="313" y="92" width="1" height="22" fill="#E1E1E1"></rect>
 <path d="M323.5,108.3 L327.3,96.5 H330.3 L334.2,108.3 H331 L330.1,105.3 H327.4 L326.6,108.3z M328,102.8 H329.6 L328.8,99.8z" fill="#fff" stroke="#3E7CC3" stroke-width="1.1" stroke-linejoin="round"></path>
 <use href="#dd" x="341" y="102" fill="#666"></use>
 <text x="354" y="102" font-size="8" fill="#555" font-family="Liberation Sans">ab</text>
 <path d="M359,106 L368,96" stroke="#6D6D6D" stroke-width="2.2"></path>
 <rect x="354" y="107" width="16.2" height="4" fill="#FFFF00"></rect>
 <use href="#dd" x="376" y="102" fill="#666"></use>
 <text x="391.6" y="106.9" font-size="13" font-weight="bold" fill="#555" font-family="Liberation Sans" textLength="9" lengthAdjust="spacingAndGlyphs">A</text>
 <rect x="387.8" y="107" width="16.1" height="4" fill="#FF0000"></rect>
 <use href="#dd" x="410" y="102" fill="#666"></use>
 <path d="M417.5,131.5h-5.5v5" fill="none" stroke="#777" stroke-width="1"></path><path d="M415,134.5l3,3" stroke="#777" stroke-width="1"></path><path d="M419,134v3.5h-3.5z" fill="#777"></path>
</g>
<!-- Párrafo -->
<g fill="#3E7CC3">
 <circle cx="433.4" cy="65.5" r="1.5"></circle><circle cx="433.4" cy="71.5" r="1.5"></circle><circle cx="433.4" cy="77.5" r="1.5"></circle>
</g>
<g stroke="#666" stroke-width="1">
 <path d="M437,65.5h8M437,71.5h8M437,77.5h8"></path>
 <path d="M471,65.5h9M471,71.5h9M471,77.5h9"></path>
 <path d="M504,65.5h11M509,71.5h6M512,77.5h3"></path>
 <path d="M548,67.5h9M550,70.5h7M550,73.5h7M548,76.5h9M543,67.5h3M543,76.5h3"></path>
 <path d="M570,67.5h9M572,70.5h7M572,73.5h7M570,76.5h9M565,67.5h3M565,76.5h3"></path>
 <path d="M432,98.5h14M432,101.5h10M432,104.5h14M432,107.5h10"></path>
 <path d="M454,98.5h14M456,101.5h10M454,104.5h14M456,107.5h10"></path>
 <path d="M476,98.5h14M480,101.5h10M476,104.5h14M480,107.5h10"></path>
 <path d="M498,98.5h14M498,101.5h14M498,104.5h14M498,107.5h14"></path>
 <path d="M535,98.5h8M535,101.5h8M535,104.5h8M535,107.5h8"></path>
</g>
<g fill="#3E7CC3" font-family="Liberation Sans" font-weight="bold">
 <text x="464.3" y="68.8" font-size="6.5">1</text><text x="464.3" y="74.8" font-size="6.5">2</text><text x="464.3" y="80.8" font-size="6.5">3</text>
 <text x="498.5" y="68.5" font-size="6.5">1</text><text x="502.5" y="74" font-size="6.5">a</text><text x="507.5" y="80.5" font-size="6.5">i</text>
</g>
<use href="#dd" x="453" y="71.5" fill="#666"></use><use href="#dd" x="487" y="71.5" fill="#666"></use><use href="#dd" x="519.5" y="71.5" fill="#666"></use>
<rect x="533" y="61" width="1" height="22" fill="#E1E1E1"></rect>
<path d="M541,72 l4,-3.5v2.5h3v2h-3v2.5z" fill="#3E7CC3"></path>
<path d="M569,72 l-4,-3.5v2.5h-3v2h3v2.5z" fill="#3E7CC3"></path>
<rect x="586" y="61" width="1" height="22" fill="#E1E1E1"></rect>
<text x="595.7" y="71" font-size="9" fill="#3E7CC3" font-family="Liberation Sans" textLength="6.5" lengthAdjust="spacingAndGlyphs">A</text>
<text x="596" y="79" font-size="9" fill="#8E44AD" font-family="Liberation Sans" textLength="6" lengthAdjust="spacingAndGlyphs">Z</text>
<path d="M606.5,64v14M603.5,75.5l3,3l3,-3" fill="none" stroke="#5F5F5F" stroke-width="1"></path>
<rect x="617" y="61" width="1" height="22" fill="#E1E1E1"></rect>
<text x="627" y="78" font-size="13" font-weight="bold" fill="#5F5F5F" font-family="Liberation Sans" textLength="11" lengthAdjust="spacingAndGlyphs">¶</text>
<rect x="520" y="92" width="1" height="22" fill="#E1E1E1"></rect>
<path d="M531.5,96v14" stroke="#3E7CC3" stroke-width="1.2"></path>
<path d="M529,98l2.5,-3l2.5,3zM529,108l2.5,3l2.5,-3z" fill="#3E7CC3"></path>
<use href="#dd" x="548" y="102" fill="#666"></use>
<rect x="562" y="92" width="1" height="22" fill="#E1E1E1"></rect>
<path d="M575,95.5l6,6l-6,6l-6,-6z" fill="#fff" stroke="#666" stroke-width="1"></path>
<path d="M576,95.5v5" stroke="#666"></path>
<path d="M582,100 q3,1 2,5" stroke="#3E7CC3" stroke-width="2" fill="none"></path>
<rect x="570.5" y="107.5" width="15.5" height="3" fill="#fff" stroke="#888"></rect>
<use href="#dd" x="592.5" y="102" fill="#666"></use>
<g fill="#555">
 <rect x="605" y="96" width="1" height="1"></rect><rect x="605" y="102" width="1" height="1"></rect><rect x="607" y="96" width="1" height="1"></rect><rect x="607" y="102" width="1" height="1"></rect><rect x="609" y="96" width="1" height="1"></rect><rect x="609" y="102" width="1" height="1"></rect><rect x="611" y="96" width="1" height="1"></rect><rect x="611" y="102" width="1" height="1"></rect><rect x="613" y="96" width="1" height="1"></rect><rect x="613" y="102" width="1" height="1"></rect><rect x="615" y="96" width="1" height="1"></rect><rect x="615" y="102" width="1" height="1"></rect><rect x="617" y="96" width="1" height="1"></rect><rect x="617" y="102" width="1" height="1"></rect><rect x="605" y="96" width="1" height="1"></rect><rect x="611" y="96" width="1" height="1"></rect><rect x="617" y="96" width="1" height="1"></rect><rect x="605" y="98" width="1" height="1"></rect><rect x="611" y="98" width="1" height="1"></rect><rect x="617" y="98" width="1" height="1"></rect><rect x="605" y="100" width="1" height="1"></rect><rect x="611" y="100" width="1" height="1"></rect><rect x="617" y="100" width="1" height="1"></rect><rect x="605" y="102" width="1" height="1"></rect><rect x="611" y="102" width="1" height="1"></rect><rect x="617" y="102" width="1" height="1"></rect><rect x="605" y="104" width="1" height="1"></rect><rect x="611" y="104" width="1" height="1"></rect><rect x="617" y="104" width="1" height="1"></rect><rect x="605" y="106" width="1" height="1"></rect><rect x="611" y="106" width="1" height="1"></rect><rect x="617" y="106" width="1" height="1"></rect>
 <rect x="605" y="108" width="14" height="1"></rect>
</g>
<use href="#dd" x="626.5" y="102" fill="#333"></use>
<path d="M642.5,131.5h-5.5v5" fill="none" stroke="#777" stroke-width="1"></path><path d="M640,134.5l3,3" stroke="#777" stroke-width="1"></path><path d="M644,134v3.5h-3.5z" fill="#777"></path>
<!-- Estilos -->
<g fill="#9A9A9A">
 <path d="M1164.5,69.5l3,-3l3,3z"></path>
 <path d="M1164.5,85l3,3l3,-3z"></path>
 <rect x="1164.5" y="102" width="6" height="1"></rect>
 <path d="M1164.5,105l3,3l3,-3z"></path>
</g>
<path d="M1176.5,131.5h-5.5v5" fill="none" stroke="#777" stroke-width="1"></path><path d="M1174,134.5l3,3" stroke="#777" stroke-width="1"></path><path d="M1178,134v3.5h-3.5z" fill="#777"></path>
<!-- Edicion -->
<g id="bino"><path d="M1190,70 v-6 q0,-2 1.5,-2.5 v-3 q0,-1.5 1.5,-1.5 h1 q1.5,0 1.5,1.5 v3 h3.5 v-3 q0,-1.5 1.5,-1.5 h1 q1.5,0 1.5,1.5 v3 q1.5,0.5 1.5,2.5 v6 h-6 v-4 h-3.5 v4z" fill="#5F5F5F"></path>
<rect x="1191" y="64.5" width="1" height="4.5" fill="#fff"></rect><rect x="1203" y="64.5" width="1" height="4.5" fill="#fff"></rect>
<circle cx="1193.5" cy="59.5" r="0.8" fill="#fff"></circle><circle cx="1201.5" cy="59.5" r="0.8" fill="#fff"></circle><circle cx="1197.5" cy="64" r="0.8" fill="#fff"></circle></g>
<use href="#dd" x="1254" y="63" fill="#666"></use>
<text x="1189.8" y="87.5" font-size="10" font-weight="bold" fill="#5F5F5F" font-family="Liberation Sans" textLength="5.5" lengthAdjust="spacingAndGlyphs">a</text>
<text x="1195.5" y="87.5" font-size="10" fill="#AAA" font-family="Liberation Sans" textLength="5.5" lengthAdjust="spacingAndGlyphs">b</text>
<text x="1195.5" y="95" font-size="11" font-weight="bold" fill="#5F5F5F" font-family="Liberation Sans" textLength="5.5" lengthAdjust="spacingAndGlyphs">a</text>
<text x="1201" y="95" font-size="11" font-weight="bold" fill="#3E7CC3" font-family="Liberation Sans" textLength="5.5" lengthAdjust="spacingAndGlyphs">c</text>
<path d="M1193,89v3h-3M1191,91l-1.2,1l1.2,1" fill="none" stroke="#3E7CC3" stroke-width="1"></path>
<path d="M1194.5,102v12l3,-3l2.5,5l1.5,-1l-2.5,-5h4z" fill="#fff" stroke="#666" stroke-width="1"></path>
<use href="#dd" x="1272" y="109" fill="#666"></use>
<path d="M1346.5,136.5l4.5,-4.5l4.5,4.5" fill="none" stroke="#555" stroke-width="1.5"></path>
<!-- ruler markers -->
<g fill="#666">
 <g id="gm" fill="#6A6A6A" shape-rendering="crispEdges"><rect x="398" y="149" width="1" height="8"></rect><rect x="400" y="149" width="1" height="8"></rect><rect x="402" y="149" width="1" height="8"></rect><rect x="404" y="149" width="1" height="8"></rect><rect x="398" y="150" width="7" height="1"></rect><rect x="398" y="152" width="7" height="1"></rect><rect x="398" y="154" width="7" height="1"></rect><rect x="398" y="156" width="7" height="1"></rect></g>
 <use href="#gm" x="281"></use>
 <use href="#gm" x="586.5"></use>
</g>
<rect x="675" y="148" width="11" height="10" fill="#E6E6E6"></rect>
<use href="#gm" x="281"></use>
<path d="M686.5,145.5h8v3.5l-4,4.5l-4,-4.5z" fill="#fff" stroke="#6A6A6A"></path>
<path d="M690.5,153.5l-4,4.5v2.5h8v-2.5z" fill="#fff" stroke="#6A6A6A"></path>
<rect x="686.5" y="160.5" width="8" height="6" fill="#fff" stroke="#6A6A6A"></rect>
<path d="M677.5,160.5v-3l4,-4l4,4v3z" fill="#fff" stroke="#6A6A6A" transform="translate(300,0)"></path>
<!-- table move handle -->
<path d="M396,688v7M392.5,691.5h7" stroke="#555" stroke-width="1"></path>
<path d="M394.5,689.5l1.5,-2l1.5,2zM394.5,693.5l1.5,2l1.5,-2zM393.5,690l-2,1.5l2,1.5zM398.5,690l2,1.5l-2,1.5z" fill="#555"></path>
<!-- status bar icons -->
<rect x="1109" y="706" width="38" height="22" fill="#1E4B8C"></rect>
<g fill="none" stroke="#fff" stroke-width="1">
 <path d="M1083.5,711.5v10h5l1,1l1,-1h5v-10h-5l-1,1l-1,-1z M1089.5,712.5v10"></path>
 <path d="M1085,713.5h3M1085,715.5h3M1085,717.5h3M1085,719.5h3M1091,713.5h3M1091,715.5h3M1091,717.5h3M1091,719.5h3"></path>
 <rect x="1121.5" y="710.5" width="13" height="11"></rect>
 <path d="M1123,712.5h10M1123,714.5h10M1123,716.5h10M1123,718.5h10"></path>
 <path d="M1163.5,721.5h-4v-11h10v4M1161,712.5h7M1161,714.5h6M1161,716.5h4"></path>
 <path d="M211.5,711.5h5l1,1l1,-1h4v10h-4l-1,1l-1,-1h-5z M217.5,712.5v10"></path>
</g>
<circle cx="1169.5" cy="719.5" r="3.8" fill="#fff"></circle>
<path d="M1166.5,719.5h6M1169.5,716.5v6" stroke="#2B579A" stroke-width="0.8"></path>
<path d="M219,714.5l3,3.5M222,714.5l-3,3.5" stroke="#fff" stroke-width="1"></path>
<rect x="1190" y="716" width="6" height="2" fill="#fff"></rect>
<rect x="1200" y="716" width="100" height="1" fill="#fff"></rect>
<rect x="1248" y="711" width="4" height="11" fill="#fff"></rect>
<path d="M1304,717h8M1308,713v8" stroke="#fff" stroke-width="2"></path>
<!-- taskbar -->
<g fill="#fff">
 <path d="M14,740.5l9,-1.3v8.8h-9z M24.5,739l9.8,-1.4v10.4h-9.8z M14,749h9v8.8l-9,-1.3z M24.5,749h9.8v9.5l-9.8,-1.4z"></path>
</g>
<g>
 <defs>
  <linearGradient id="ffg" x1="0.8" y1="0" x2="0.3" y2="1"><stop offset="0" stop-color="#FFE03A"></stop><stop offset="0.45" stop-color="#FF7A2E"></stop><stop offset="1" stop-color="#F0177A"></stop></linearGradient>
  <radialGradient id="ffp" cx="0.4" cy="0.35" r="0.7"><stop offset="0" stop-color="#9B5CF5"></stop><stop offset="1" stop-color="#5B2BC4"></stop></radialGradient>
 </defs>
 <path d="M70,742 q-4,5 -3.5,9 q1,8 10.5,9 q10,0 11,-10 q0.5,-7 -4,-11 q1.5,3 0.5,6 q-1,-5 -6,-8.5 q1.5,4 -1,6 q-3,-2 -7.5,-0.5z" fill="url(#ffg)"></path>
 <circle cx="77.3" cy="750.2" r="5.6" fill="url(#ffp)"></circle>
 <path d="M68.5,745 q3,-2.5 8,-1 q-4,1 -5,3.5 q-2,-1 -3,-2.5z" fill="#FF9A2E"></path>
 <path d="M82,737 q5,3 6,9 q-2,-4 -5,-5z" fill="#FFD33A"></path>
</g>
<g>
 <circle cx="130" cy="748" r="11" fill="#DB4437"></circle>
 <path d="M130,748 L120.5,742.5 A11,11 0 0 0 124.5,757.5z" fill="#0F9D58"></path>
 <path d="M130,748 L124.5,757.5 A11,11 0 0 0 141,748z" fill="#F4B400"></path>
 <circle cx="130" cy="748" r="5" fill="#fff"></circle>
 <circle cx="130" cy="748" r="3.8" fill="#4285F4"></circle>
 <circle cx="136.5" cy="753.5" r="7.5" fill="#5A5A5A"></circle>
 <circle cx="136.5" cy="753.5" r="6" fill="#B9B9C3"></circle>
 <path d="M133,751h7v5h-7z" fill="#333"></path>
 <path d="M132,750l2,2M141,750l-2,2" stroke="#29A" stroke-width="1"></path>
</g>
<g>
 <rect x="172" y="741" width="21.5" height="16" rx="0.8" fill="#F9D77E"></rect>
 <path d="M172,741.5h6.5l1.5,-2h-8z" fill="#E8B94A"></path>
 <rect x="172" y="743" width="21.5" height="1.2" fill="#E8B94A"></rect>
 <rect x="176.5" y="749" width="13" height="8" fill="#2FA3E4"></rect>
 <rect x="179.5" y="752" width="7" height="5" fill="#F9D77E"></rect>
</g>
<g>
 <rect x="225.5" y="740.5" width="21" height="15" fill="#5FC3F1" stroke="#1A6FB5" stroke-width="0.8"></rect>
 <circle cx="231.5" cy="746.5" r="4" fill="#fff"></circle>
 <path d="M231.5,746.5v-4a4,4 0 0 1 4,4z" fill="#F5A623"></path>
 <path d="M231.5,746.5h4a4,4 0 0 1 -6,3.4z" fill="#1A6FB5"></path>
 <rect x="237" y="743" width="2" height="2" fill="#1A6FB5"></rect><rect x="240" y="743" width="5" height="1" fill="#fff"></rect>
 <rect x="240" y="746" width="5" height="1" fill="#fff"></rect><rect x="240" y="749" width="5" height="1" fill="#fff"></rect>
 <rect x="227" y="752" width="17" height="1" fill="#F5A623"></rect>
</g>
<rect x="263" y="728" width="52" height="40" fill="#333333"></rect>
<g>
 <rect x="285" y="740" width="15" height="18" fill="#fff" stroke="#2B579A" stroke-width="1"></rect>
 <path d="M288,743.5h10M288,746h10M288,748.5h10M288,751h10M288,753.5h10" stroke="#2B579A" stroke-width="1"></path>
 <path d="M277.5,739 L289,736.5 V759 L277.5,756.5z" fill="#2B579A"></path>
 <text x="283.3" y="752" font-size="9.5" font-weight="bold" fill="#fff" text-anchor="middle" font-family="Liberation Sans">W</text>
</g>
<g>
 <ellipse cx="340" cy="751" rx="10" ry="8" fill="#C8E4F4" transform="rotate(-15 340 751)"></ellipse>
 <circle cx="334" cy="752" r="2" fill="#E04B4B"></circle>
 <circle cx="338" cy="746.5" r="2" fill="#7BC043"></circle>
 <circle cx="344" cy="745" r="2" fill="#F5A623"></circle>
 <circle cx="340.5" cy="754" r="1.8" fill="#333"></circle>
 <path d="M341,760 L352,738" stroke="#E0862A" stroke-width="1.8"></path>
 <path d="M350,741 l3,-5 l2,2z" fill="#D9A066"></path>
</g>
<g fill="#A5A5A5">
 <rect x="108" y="766" width="44" height="2"></rect><rect x="161" y="766" width="44" height="2"></rect><rect x="214" y="766" width="44" height="2"></rect><rect x="263" y="766" width="52" height="2"></rect><rect x="320" y="766" width="44" height="2"></rect>
</g>
<!-- tray -->
<g fill="none" stroke="#fff" stroke-width="1.2">
 <path d="M1123,751l6,-6l6,6"></path>
 <rect x="1150.5" y="742.5" width="10" height="8"></rect>
 <path d="M1155.5,750.5v3M1151.5,754.5h8"></path>
 <rect x="1145" y="741.5" width="4.5" height="4" stroke-width="1"></rect>
 <path d="M1147.2,745.5v8.5h4" stroke-width="1"></path>
 <path d="M1169.5,743.5l15,-2v14l-15,-1z"></path>
 <path d="M1176,748.5a2.5,2.5 0 1 1 2,3" stroke-width="1"></path>
 <path d="M1193,746h3l4,-4v14l-4,-4h-3z"></path>
 <path d="M1202,746.5q1.5,2 0,4M1204.5,744.5q3,4 0,8M1207,742.5q4.5,6 0,12" stroke="#aaa"></path>
 <path d="M1325.5,741.5h15v11h-5l-2.5,3l-2.5,-3h-5z"></path>
</g>
<circle cx="1180.8" cy="751.4" r="3.6" fill="#E81123"></circle>
<rect x="1180.3" y="749" width="1" height="3" fill="#fff"></rect><rect x="1180.3" y="752.5" width="1" height="1" fill="#fff"></rect>
<rect x="1361" y="728" width="1" height="40" fill="#5A5A5A"></rect>
</svg>


</body></html>
